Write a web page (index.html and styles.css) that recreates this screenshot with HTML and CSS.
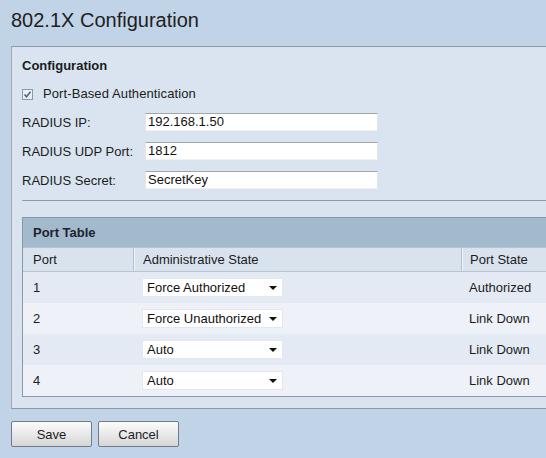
FILE: index.html
```html
<!DOCTYPE html>
<html>
<head>
<meta charset="utf-8">
<link rel="stylesheet" href="styles.css">
</head>
<body>
<div class="page">
  <h1 class="title">802.1X Configuration</h1>
  <div class="panel">
    <h2 class="section-title">Configuration</h2>
    <div class="check-row">
      <span class="checkbox">
        <svg width="11" height="11" viewBox="0 0 11 11"><rect x="0.5" y="0.5" width="10" height="10" fill="#e9eef4" stroke="#8e99a4"/><path d="M2.5 5.5 L4.5 7.8 L8.5 2.8" fill="none" stroke="#4a5a8a" stroke-width="1.4"/></svg>
      </span>
      <span>Port-Based Authentication</span>
    </div>
    <div class="field-row">
      <label class="field-label">RADIUS IP:</label>
      <div class="text-input">192.168.1.50</div>
    </div>
    <div class="field-row">
      <label class="field-label">RADIUS UDP Port:</label>
      <div class="text-input">1812</div>
    </div>
    <div class="field-row">
      <label class="field-label">RADIUS Secret:</label>
      <div class="text-input">SecretKey</div>
    </div>
    <div class="separator"></div>
    <div class="port-table">
      <div class="table-caption">Port Table</div>
      <div class="trow thead">
        <div class="cell c-port">Port</div>
        <div class="cell c-admin divider">Administrative State</div>
        <div class="cell c-state divider">Port State</div>
      </div>
      <div class="trow odd">
        <div class="cell c-port">1</div>
        <div class="cell c-admin"><div class="select"><span>Force Authorized</span><svg width="8" height="4" viewBox="0 0 8 4"><path d="M0 0 H8 L4 4 Z" fill="#111"/></svg></div></div>
        <div class="cell c-state">Authorized</div>
      </div>
      <div class="trow even">
        <div class="cell c-port">2</div>
        <div class="cell c-admin"><div class="select"><span>Force Unauthorized</span><svg width="8" height="4" viewBox="0 0 8 4"><path d="M0 0 H8 L4 4 Z" fill="#111"/></svg></div></div>
        <div class="cell c-state">Link Down</div>
      </div>
      <div class="trow odd">
        <div class="cell c-port">3</div>
        <div class="cell c-admin"><div class="select"><span>Auto</span><svg width="8" height="4" viewBox="0 0 8 4"><path d="M0 0 H8 L4 4 Z" fill="#111"/></svg></div></div>
        <div class="cell c-state">Link Down</div>
      </div>
      <div class="trow even">
        <div class="cell c-port">4</div>
        <div class="cell c-admin"><div class="select"><span>Auto</span><svg width="8" height="4" viewBox="0 0 8 4"><path d="M0 0 H8 L4 4 Z" fill="#111"/></svg></div></div>
        <div class="cell c-state">Link Down</div>
      </div>
    </div>
  </div>
  <div class="actions">
    <button class="btn">Save</button>
    <button class="btn">Cancel</button>
  </div>
</div>
</body>
</html>
```

FILE: styles.css
```css
html, body {
  margin: 0;
  padding: 0;
  background: #c1d3e7;
  overflow: hidden;
}
body {
  font-family: "Liberation Sans", Arial, sans-serif;
  font-size: 13px;
  color: #1c1c1c;
}
.page {
  width: 100%;
}
.title {
  margin: 0;
  height: 46px;
  box-sizing: border-box;
  padding: 7px 0 0 11px;
  font-size: 20px;
  font-weight: normal;
  line-height: 26px;
  color: #1e1e1e;
}
.panel {
  margin-left: 11px;
  background: #d9e4f0;
  border-top: 1px solid #8a99a8;
  border-left: 1px solid #9aa8b6;
  border-bottom: 1px solid #8a99a8;
  padding: 11px 0 11px 10px;
}
.section-title {
  margin: 0;
  font-size: 13px;
  font-weight: bold;
  line-height: 16px;
  height: 16px;
}
.check-row {
  display: flex;
  align-items: center;
  gap: 10px;
  margin-top: 12px;
  height: 16px;
  line-height: 16px;
  letter-spacing: 0.1px;
}
.checkbox {
  display: flex;
  width: 11px;
  height: 11px;
}
.field-row {
  display: flex;
  align-items: center;
  height: 18px;
  margin-top: 11px;
}
.field-label {
  width: 123px;
  flex: none;
}
.text-input {
  width: 233px;
  height: 18px;
  box-sizing: border-box;
  background: #fff;
  border-top: 1px solid #9ea6ae;
  border-left: 1px solid #e2e6ea;
  border-right: 1px solid #e2e6ea;
  border-bottom: 1px solid #eef0f2;
  padding: 0 0 0 2px;
  line-height: 16px;
  color: #111;
}
.separator {
  margin-top: 11px;
  height: 0;
  border-top: 1px solid #8e9ba7;
}
.port-table {
  margin-top: 16px;
  border-top: 1px solid #8a99a8;
  border-left: 1px solid #8a99a8;
  border-bottom: 1px solid #8a99a8;
}
.table-caption {
  height: 29px;
  line-height: 29px;
  background: #a3b9cc;
  font-weight: bold;
  padding-left: 10px;
  color: #1c2430;
}
.trow {
  display: flex;
  align-items: stretch;
}
.thead {
  height: 23px;
  background: #d9e3ee;
  border-top: 1px solid #b7c4d1;
  border-bottom: 1px solid #b7c4d1;
}
.odd {
  height: 31px;
  background: #e3eaf3;
}
.even {
  height: 31px;
  background: #eef2f8;
}
.cell {
  display: flex;
  align-items: center;
  box-sizing: border-box;
}
.c-port {
  width: 110px;
  flex: none;
  padding-left: 10px;
}
.c-admin {
  width: 328px;
  flex: none;
  padding-left: 9px;
}
.c-state {
  flex: 1;
  padding-left: 8px;
  white-space: nowrap;
}
.divider {
  border-left: 1px solid #b3c0cd;
  box-shadow: inset 1px 0 0 #eef3f8;
}
.select {
  width: 141px;
  height: 19px;
  box-sizing: border-box;
  background: #fff;
  border: 1px solid #e4e8ec;
  display: flex;
  align-items: center;
  justify-content: space-between;
  padding: 0 5px 0 4px;
  color: #111;
}
.select svg {
  flex: none;
}
.actions {
  display: flex;
  gap: 6px;
  padding: 12px 0 0 11px;
}
.btn {
  width: 81px;
  height: 26px;
  font-family: "Liberation Sans", Arial, sans-serif;
  font-size: 13px;
  color: #1c1c1c;
  background: linear-gradient(#fbfbfb, #e9e9e9 50%, #d6d6d6);
  border: 1px solid #6f7b86;
  border-radius: 2px;
  padding: 0;
}
```
